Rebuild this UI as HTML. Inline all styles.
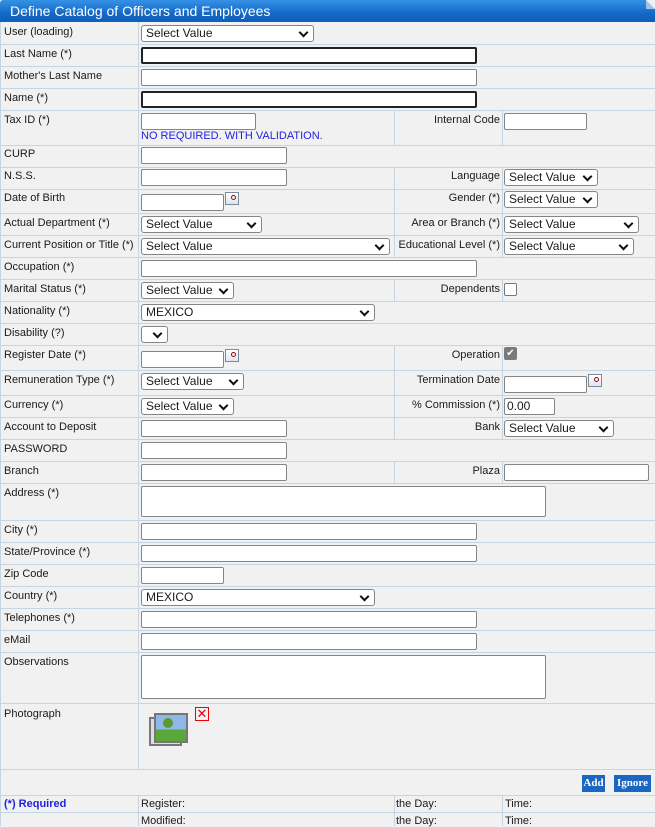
<!DOCTYPE html>
<html><head><meta charset="utf-8"><style>
*{box-sizing:border-box;margin:0;padding:0}
body{width:655px;height:826px;background:#f1f1f1;font-family:"Liberation Sans",Arial,sans-serif;font-size:11px;color:#1a1a1a;position:relative;overflow:hidden}
.t{position:absolute;left:0;top:0;width:655px;height:22px;background:linear-gradient(#3592e6,#1469c6 60%,#0f5fb8);color:#fff;font-size:14px;line-height:22px;padding-left:10px;border-radius:3px 3px 0 0}
.fold{position:absolute;right:0;top:0;width:0;height:0;border-top:9px solid #f1f1f1;border-left:9px solid #9cc4ee}
.h{position:absolute;left:0;width:655px;height:1px;background:#c6d5e4}
.v{position:absolute;width:1px;background:#c6d5e4}
.l{position:absolute;left:4px;white-space:nowrap}
.rl{position:absolute;right:155px;white-space:nowrap;text-align:right}
.i{position:absolute;height:17px;border:1px solid #858585;background:#fff;border-radius:2px;font-size:13px;padding-left:2px;line-height:15px}
.th{border:2px solid #222}
.s{position:absolute;height:17px;border:1px solid #858585;background:#fff;border-radius:3px;font-size:12px;line-height:15px;padding-left:4px;white-space:nowrap;overflow:hidden}
.s:after{content:"";position:absolute;right:6px;top:3px;width:5px;height:5px;border-right:2px solid #111;border-bottom:2px solid #111;transform:rotate(45deg)}
.cal{position:absolute;width:14px;height:13px;border:1px solid #7a8a9a;background:linear-gradient(#fff,#dde5ee)}
.cal:after{content:"";position:absolute;right:2px;top:2px;width:3px;height:3px;border:1px solid #a00;border-radius:50%}
.cb{position:absolute;width:13px;height:13px;border:1px solid #777;border-radius:2px;background:#fff}
.bt{position:absolute;height:17px;background:#1b66c1;color:#fff;font-weight:bold;font-family:"Liberation Serif",serif;font-size:11px;line-height:17px;text-align:center}
</style></head><body>
<div class="t">Define Catalog of Officers and Employees</div><div class="fold"></div>

<div class="h" style="top:44px"></div><div class="h" style="top:66px"></div><div class="h" style="top:88px"></div><div class="h" style="top:110px"></div><div class="h" style="top:145px"></div><div class="h" style="top:167px"></div><div class="h" style="top:189px"></div><div class="h" style="top:213px"></div><div class="h" style="top:235px"></div><div class="h" style="top:257px"></div><div class="h" style="top:279px"></div><div class="h" style="top:301px"></div><div class="h" style="top:323px"></div><div class="h" style="top:345px"></div><div class="h" style="top:370px"></div><div class="h" style="top:395px"></div><div class="h" style="top:417px"></div><div class="h" style="top:439px"></div><div class="h" style="top:461px"></div><div class="h" style="top:483px"></div><div class="h" style="top:520px"></div><div class="h" style="top:542px"></div><div class="h" style="top:564px"></div><div class="h" style="top:586px"></div><div class="h" style="top:608px"></div><div class="h" style="top:630px"></div><div class="h" style="top:652px"></div><div class="h" style="top:703px"></div><div class="h" style="top:769px"></div><div class="h" style="top:795px"></div><div class="h" style="top:812px"></div>
<div class="v" style="left:0;top:22px;height:804px"></div>
<div class="v" style="left:138px;top:22px;height:747px"></div>
<div class="v" style="left:138px;top:795px;height:31px"></div>
<div class="v" style="left:394px;top:795px;height:31px"></div>
<div class="v" style="left:502px;top:795px;height:31px"></div>
<div class="v" style="left:394px;top:110px;height:35px"></div><div class="v" style="left:502px;top:110px;height:35px"></div>
<div class="v" style="left:394px;top:167px;height:90px"></div><div class="v" style="left:502px;top:167px;height:90px"></div>
<div class="v" style="left:394px;top:279px;height:22px"></div><div class="v" style="left:502px;top:279px;height:22px"></div>
<div class="v" style="left:394px;top:345px;height:94px"></div><div class="v" style="left:502px;top:345px;height:94px"></div>
<div class="v" style="left:394px;top:461px;height:22px"></div><div class="v" style="left:502px;top:461px;height:22px"></div>

<div class="l" style="top:26px">User (loading)</div><div class="s" style="left:141px;top:25px;width:173px">Select Value</div>
<div class="l" style="top:48px">Last Name (*)</div><div class="i th" style="left:141px;top:47px;width:336px"></div>
<div class="l" style="top:70px">Mother's Last Name</div><div class="i" style="left:141px;top:69px;width:336px"></div>
<div class="l" style="top:92px">Name (*)</div><div class="i th" style="left:141px;top:91px;width:336px"></div>
<div class="l" style="top:114px">Tax ID (*)</div><div class="i" style="left:141px;top:113px;width:115px"></div>
<div style="position:absolute;left:141px;top:130px;color:#2222dd">NO REQUIRED. WITH VALIDATION.</div>
<div class="rl" style="top:114px">Internal Code</div><div class="i" style="left:504px;top:113px;width:83px"></div>
<div class="l" style="top:148px">CURP</div><div class="i" style="left:141px;top:147px;width:146px"></div>
<div class="l" style="top:170px">N.S.S.</div><div class="i" style="left:141px;top:169px;width:146px"></div>
<div class="rl" style="top:170px">Language</div><div class="s" style="left:504px;top:169px;width:94px">Select Value</div>
<div class="l" style="top:192px">Date of Birth</div><div class="i" style="left:141px;top:194px;width:83px"></div><div class="cal" style="left:225px;top:192px"></div>
<div class="rl" style="top:192px">Gender (*)</div><div class="s" style="left:504px;top:191px;width:94px">Select Value</div>
<div class="l" style="top:217px">Actual Department (*)</div><div class="s" style="left:141px;top:216px;width:121px">Select Value</div>
<div class="rl" style="top:217px">Area or Branch (*)</div><div class="s" style="left:504px;top:216px;width:135px">Select Value</div>
<div class="l" style="top:239px">Current Position or Title (*)</div><div class="s" style="left:141px;top:238px;width:249px">Select Value</div>
<div class="rl" style="top:239px">Educational Level (*)</div><div class="s" style="left:504px;top:238px;width:130px">Select Value</div>
<div class="l" style="top:261px">Occupation (*)</div><div class="i" style="left:141px;top:260px;width:336px"></div>
<div class="l" style="top:283px">Marital Status (*)</div><div class="s" style="left:141px;top:282px;width:93px">Select Value</div>
<div class="rl" style="top:283px">Dependents</div><div class="cb" style="left:504px;top:283px"></div>
<div class="l" style="top:305px">Nationality (*)</div><div class="s" style="left:141px;top:304px;width:234px">MEXICO</div>
<div class="l" style="top:327px">Disability (?)</div><div class="s" style="left:141px;top:326px;width:27px"></div>
<div class="l" style="top:349px">Register Date (*)</div><div class="i" style="left:141px;top:351px;width:83px"></div><div class="cal" style="left:225px;top:349px"></div>
<div class="rl" style="top:349px">Operation</div><div class="cb" style="left:504px;top:347px;background:#7a7a7a;border-color:#7a7a7a;color:#fff;font-size:10px;line-height:11px;text-align:center">✔</div>
<div class="l" style="top:374px">Remuneration Type (*)</div><div class="s" style="left:141px;top:373px;width:103px">Select Value</div>
<div class="rl" style="top:374px">Termination Date</div><div class="i" style="left:504px;top:376px;width:83px"></div><div class="cal" style="left:588px;top:374px"></div>
<div class="l" style="top:399px">Currency (*)</div><div class="s" style="left:141px;top:398px;width:93px">Select Value</div>
<div class="rl" style="top:399px">% Commission (*)</div><div class="i" style="left:504px;top:398px;width:51px;font-size:12px">0.00</div>
<div class="l" style="top:421px">Account to Deposit</div><div class="i" style="left:141px;top:420px;width:146px"></div>
<div class="rl" style="top:421px">Bank</div><div class="s" style="left:504px;top:420px;width:110px">Select Value</div>
<div class="l" style="top:443px">PASSWORD</div><div class="i" style="left:141px;top:442px;width:146px"></div>
<div class="l" style="top:465px">Branch</div><div class="i" style="left:141px;top:464px;width:146px"></div>
<div class="rl" style="top:465px">Plaza</div><div class="i" style="left:504px;top:464px;width:145px"></div>
<div class="l" style="top:487px">Address (*)</div><div class="i" style="left:141px;top:486px;width:405px;height:31px"></div>
<div class="l" style="top:524px">City (*)</div><div class="i" style="left:141px;top:523px;width:336px"></div>
<div class="l" style="top:546px">State/Province (*)</div><div class="i" style="left:141px;top:545px;width:336px"></div>
<div class="l" style="top:568px">Zip Code</div><div class="i" style="left:141px;top:567px;width:83px"></div>
<div class="l" style="top:590px">Country (*)</div><div class="s" style="left:141px;top:589px;width:234px">MEXICO</div>
<div class="l" style="top:612px">Telephones (*)</div><div class="i" style="left:141px;top:611px;width:336px"></div>
<div class="l" style="top:634px">eMail</div><div class="i" style="left:141px;top:633px;width:336px"></div>
<div class="l" style="top:656px">Observations</div><div class="i" style="left:141px;top:655px;width:405px;height:44px"></div>
<div class="l" style="top:708px">Photograph</div>
<div style="position:absolute;left:149px;top:717px;width:33px;height:29px;border:2px solid #777;background:#ddd"></div>
<div style="position:absolute;left:154px;top:713px;width:34px;height:30px;border:2px solid #777;background:linear-gradient(#8fb8e8 55%,#5aa83c 55%)"><div style="position:absolute;left:7px;top:3px;width:10px;height:10px;border-radius:50%;background:#5a9a30"></div></div>
<div style="position:absolute;left:195px;top:707px;width:14px;height:14px;border:1px solid #e00;color:#e00;font-size:13px;line-height:12px;text-align:center">✕</div>
<div class="bt" style="left:582px;top:775px;width:23px">Add</div>
<div class="bt" style="left:614px;top:775px;width:37px">Ignore</div>
<div class="l" style="top:798px;color:#2222dd;font-weight:bold">(*) Required</div>
<div style="position:absolute;left:141px;top:798px">Register:</div><div style="position:absolute;left:396px;top:798px">the Day:</div><div style="position:absolute;left:505px;top:798px">Time:</div>
<div style="position:absolute;left:141px;top:815px">Modified:</div><div style="position:absolute;left:396px;top:815px">the Day:</div><div style="position:absolute;left:505px;top:815px">Time:</div>
</body></html>
